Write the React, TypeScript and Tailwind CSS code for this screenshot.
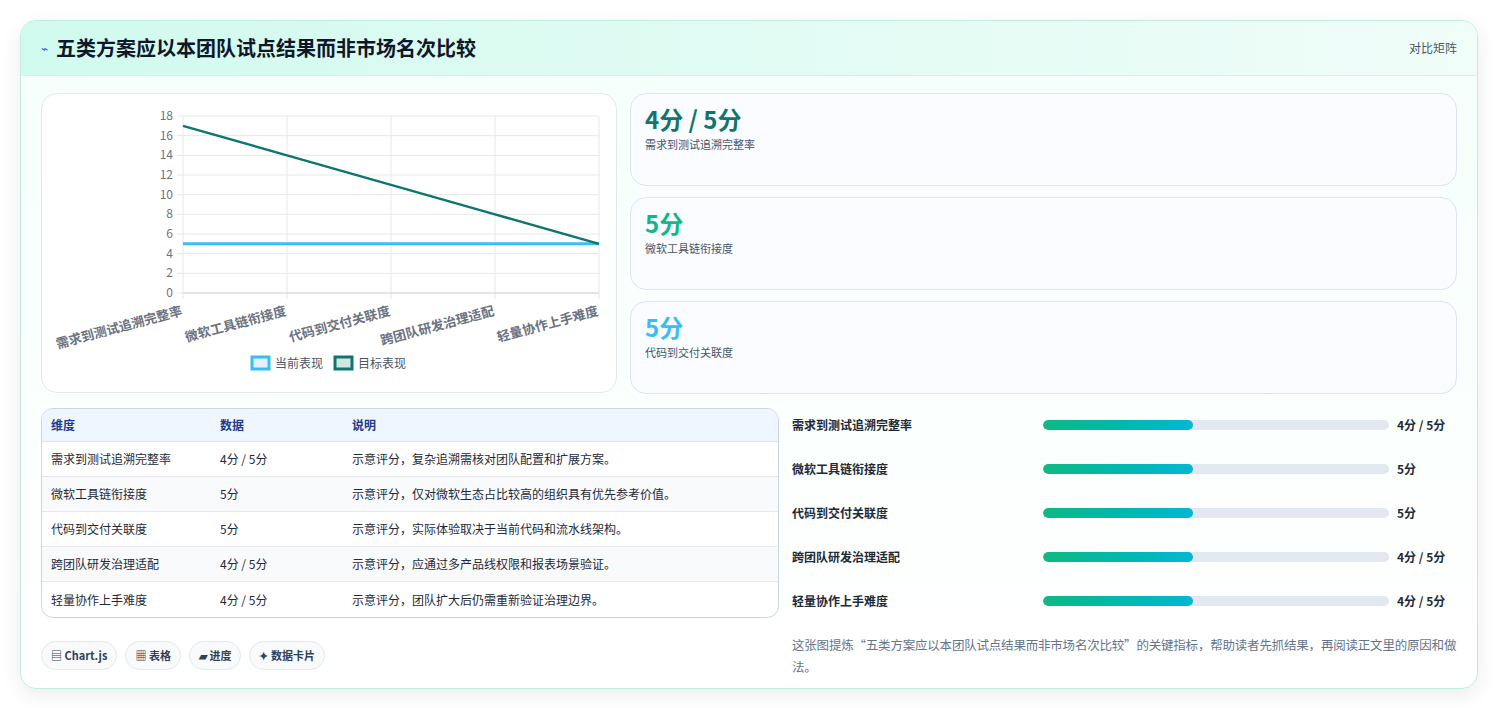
import React from 'react';

const font = { fontFamily: '"Noto Sans CJK SC", "Noto Sans", sans-serif' };

const rows = [
  { name: '需求到测试追溯完整率', value: '4分 / 5分', note: '示意评分，复杂追溯需核对团队配置和扩展方案。' },
  { name: '微软工具链衔接度', value: '5分', note: '示意评分，仅对微软生态占比较高的组织具有优先参考价值。' },
  { name: '代码到交付关联度', value: '5分', note: '示意评分，实际体验取决于当前代码和流水线架构。' },
  { name: '跨团队研发治理适配', value: '4分 / 5分', note: '示意评分，应通过多产品线权限和报表场景验证。' },
  { name: '轻量协作上手难度', value: '4分 / 5分', note: '示意评分，团队扩大后仍需重新验证治理边界。' },
];

const metrics = [
  { v: '4分 / 5分', label: '需求到测试追溯完整率', color: 'text-[#0f766e]' },
  { v: '5分', label: '微软工具链衔接度', color: 'text-[#10b981]' },
  { v: '5分', label: '代码到交付关联度', color: 'text-[#38bdf8]' },
];

function Chart() {
  const x0 = 141, x1 = 557, y0 = 22, y1 = 199;
  const xs = [0, 1, 2, 3, 4].map(i => x0 + (i * (x1 - x0)) / 4);
  const ys = (v: number) => y1 - (v / 18) * (y1 - y0);
  const target = [17, 14, 11, 8, 5];
  return (
    <svg width="575" height="299" className="block" style={{ fontFamily: '"Noto Sans CJK SC", sans-serif' }}>
      {[0, 2, 4, 6, 8, 10, 12, 14, 16, 18].map(v => (
        <g key={v}>
          <line x1={x0 - 6} x2={x1} y1={ys(v)} y2={ys(v)} stroke="#e5e7eb" />
          <text x={x0 - 10} y={ys(v) + 4} textAnchor="end" fontSize="12" fill="#6b7280">{v}</text>
        </g>
      ))}
      {xs.map((x, i) => (
        <line key={i} x1={x} x2={x} y1={y0} y2={y1 + 6} stroke="#e5e7eb" />
      ))}
      <line x1={x0} x2={x1} y1={y1} y2={y1} stroke="#d1d5db" />
      <polyline points={xs.map(x => `${x},${ys(5)}`).join(' ')} fill="none" stroke="#38bdf8" strokeWidth="3" />
      <polyline points={xs.map((x, i) => `${x},${ys(target[i])}`).join(' ')} fill="none" stroke="#0f766e" strokeWidth="2.5" />
      {rows.map((r, i) => (
        <text key={i} x={xs[i]} y={y1 + 22} textAnchor="end" fontSize="13" fontWeight="600" fill="#6b7280" transform={`rotate(-15 ${xs[i]} ${y1 + 22})`}>{r.name}</text>
      ))}
      <rect x="210" y="263" width="17" height="12" fill="#e0f2fe" stroke="#38bdf8" strokeWidth="3" />
      <text x="233" y="274" fontSize="12" fill="#4b5563">当前表现</text>
      <rect x="293" y="263" width="17" height="12" fill="#d1e7e2" stroke="#0f766e" strokeWidth="3" />
      <text x="316" y="274" fontSize="12" fill="#4b5563">目标表现</text>
    </svg>
  );
}

export default function App() {
  return (
    <div className="min-h-screen bg-white p-5" style={font}>
      <div className="rounded-2xl border border-[#bfeee0] bg-gradient-to-b from-[#f5fffb] to-white shadow-[0_6px_20px_rgba(0,0,0,0.08)] overflow-hidden">
        <div className="h-[55px] flex items-center justify-between px-5 bg-gradient-to-r from-[#d1faee] to-[#f0fdf9] border-b border-[#dbeee9]">
          <div className="flex items-center gap-2">
            <span className="text-[12px] text-[#2563eb]">⌁</span>
            <h1 className="text-[20px] font-bold text-[#0f172a]">五类方案应以本团队试点结果而非市场名次比较</h1>
          </div>
          <span className="text-xs text-[#475569]">对比矩阵</span>
        </div>
        <div className="px-5 pt-[17px] pb-[10px]">
          <div className="flex gap-[13px]">
            <div className="w-[576px] h-[300px] rounded-2xl border border-[#e2e8f0] bg-white overflow-hidden">
              <Chart />
            </div>
            <div className="flex-1 flex flex-col gap-[11px]">
              {metrics.map(m => (
                <div key={m.label} className="h-[93px] rounded-2xl border border-[#dbe4f0] bg-[#fafcff] px-[14px] pt-[9px]">
                  <div className={`text-[24px] font-bold leading-[32px] ${m.color}`}>{m.v}</div>
                  <div className="text-[11px] text-[#475569] mt-[1px]">{m.label}</div>
                </div>
              ))}
            </div>
          </div>
          <div className="flex gap-[13px] mt-[14px]">
            <div className="w-[738px] shrink-0">
              <div className="rounded-xl border border-[#cbd5e1] overflow-hidden bg-white">
                <div className="flex h-[33px] items-center bg-[#eff6ff] border-b border-[#dbe4f0] text-xs font-semibold text-[#1e3a8a]">
                  <div className="w-[178px] pl-[9px]">维度</div>
                  <div className="w-[132px]">数据</div>
                  <div>说明</div>
                </div>
                {rows.map((r, i) => (
                  <div key={r.name} className={`flex h-[35px] items-center text-xs text-[#1f2937] ${i < 4 ? 'border-b border-[#e5e7eb]' : ''} ${i % 2 === 1 ? 'bg-[#f8fafc]' : ''}`}>
                    <div className="w-[178px] pl-[9px]">{r.name}</div>
                    <div className="w-[132px]">{r.value}</div>
                    <div>{r.note}</div>
                  </div>
                ))}
              </div>
              <div className="flex gap-2 mt-[23px]">
                {['▤ Chart.js', '▦ 表格', '▰ 进度', '✦ 数据卡片'].map(t => (
                  <span key={t} className="h-[29px] px-[9px] flex items-center rounded-full border border-[#e2e8f0] bg-[#f8fafc] text-[11px] font-semibold text-[#334155]">{t}</span>
                ))}
              </div>
            </div>
            <div className="flex-1 flex flex-col gap-[10px]">
              {rows.map(r => (
                <div key={r.name} className="flex items-center h-[34px]">
                  <div className="w-[251px] text-xs font-semibold text-[#1f2937]">{r.name}</div>
                  <div className="w-[346px] h-[10px] rounded-full bg-[#e2e8f0] overflow-hidden">
                    <div className="h-full w-[150px] rounded-full bg-gradient-to-r from-[#10b981] to-[#06b6d4]" />
                  </div>
                  <div className="ml-[8px] text-xs font-bold text-[#1f2937]">{r.value}</div>
                </div>
              ))}
              <p className="mt-[6px] text-[12.5px] leading-[22px] text-[#64748b] tracking-[-0.2px]">这张图提炼“五类方案应以本团队试点结果而非市场名次比较”的关键指标，帮助读者先抓结果，再阅读正文里的原因和做法。</p>
            </div>
          </div>
        </div>
      </div>
    </div>
  );
}
